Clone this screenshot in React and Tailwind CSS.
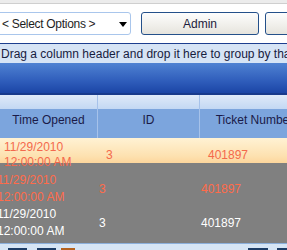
export default function App() {
  const font = { fontFamily: '"Liberation Sans", Arial, sans-serif' };
  const red = "text-[#f4694c]";
  return (
    <div className="w-[287px] h-[250px] overflow-hidden bg-white relative" style={font}>
      {/* top strip */}
      <div className="h-[4px] bg-[#ececec] border-b border-[#cfcfcf]" />
      {/* toolbar */}
      <div className="h-[39px] bg-white flex items-start pt-[8px]">
        <div className="relative -ml-[4px] w-[135px] h-[23px] border border-[#a9c6ec] rounded-[3px] bg-white flex items-center pl-[5px] text-[12px] text-[#1e1e1e] shrink-0">
          <span className="tracking-[-0.3px]">&lt; Select Options &gt;</span>
          <svg className="absolute left-[122px] top-[9px]" width="8" height="5" viewBox="0 0 8 5">
            <path d="M0 0 H8 L4 5 Z" fill="#000" />
          </svg>
        </div>
        <div className="ml-[10px] w-[118px] h-[23px] border border-[#24508a] rounded-[3px] bg-[linear-gradient(to_bottom,#fdfdfd,#f2f1ed_50%,#e6e4dd)] flex items-center justify-center text-[12px] text-[#1c1c3c] shrink-0">
          Admin
        </div>
        <div className="ml-[6px] w-[60px] h-[23px] border border-[#24508a] rounded-[3px] bg-[linear-gradient(to_bottom,#fdfdfd,#f2f1ed_50%,#e6e4dd)] shrink-0" />
      </div>
      {/* group panel */}
      <div className="h-[20px] border-t border-[#1d3f8f] bg-[#d6e4f5] flex items-center pl-[1px] text-[12px] text-[#16203e] whitespace-nowrap overflow-hidden">
        Drag a column header and drop it here to group by that column
      </div>
      {/* blue bar */}
      <div className="h-[32px] bg-[linear-gradient(to_bottom,#4f82d2,#2f5dbb_60%,#1b45a6)] border-b-[2px] border-[#183a8c]" />
      {/* header */}
      <div className="h-[43px] flex text-[12px] text-[#1a1a48]">
        {[
          ["Time Opened", "w-[98px]"],
          ["ID", "w-[102px]"],
          ["Ticket Number", "w-[110px]"],
        ].map(([label, w], i) => (
          <div key={i} className={`${w} shrink-0 flex flex-col border-r border-[#a6c2ea]`}>
            <div className="h-[14px] bg-[linear-gradient(to_bottom,#dfeaf9,#c3d8f3)]" />
            <div className="h-[29px] bg-[#7ca5dd] flex items-start justify-center pt-[2px] whitespace-nowrap">
              {label}
            </div>
          </div>
        ))}
      </div>
      {/* rows */}
      <div className="bg-[#808080] h-[105px] text-[12px] leading-[15px]">
        <div className="h-[34px] flex items-center bg-[linear-gradient(to_bottom,#fff2d4_0px,#fde1b0_18px,#fdd69c_25px,transparent_25px)] relative z-10">
          <div className={`w-[98px] shrink-0 pl-[4px] ${red}`}>
            <div>11/29/2010</div>
            <div>12:00:00 AM</div>
          </div>
          <div className={`w-[102px] shrink-0 pl-[8px] ${red}`}>3</div>
          <div className={`shrink-0 pl-[8px] ${red}`}>401897</div>
        </div>
        <div className="h-[34px] flex items-center -ml-[7px]">
          <div className="w-[98px] shrink-0 pl-[4px] text-[#ff6b4a]">
            <div className="leading-[17px]">11/29/2010</div>
            <div className="leading-[17px]">12:00:00 AM</div>
          </div>
          <div className="w-[102px] shrink-0 pl-[8px] text-[#ff6b4a]">3</div>
          <div className="shrink-0 pl-[8px] text-[#ff6b4a]">401897</div>
        </div>
        <div className="h-[34px] flex items-center -ml-[7px] text-white">
          <div className="w-[98px] shrink-0 pl-[4px]">
            <div className="leading-[17px]">11/29/2010</div>
            <div className="leading-[17px]">12:00:00 AM</div>
          </div>
          <div className="w-[102px] shrink-0 pl-[8px]">3</div>
          <div className="shrink-0 pl-[8px]">401897</div>
        </div>
      </div>
      {/* bottom panel */}
      <div className="h-[10px] border-t border-[#8cb0dc] bg-[#d6e5f5] flex items-start pt-[4px]">
        <div className="ml-[8px] w-[19px] h-[6px] bg-[#1d3d66]" />
        <div className="ml-[10px] w-[19px] h-[6px] bg-[#1d3d66]" />
        <div className="ml-[5px] w-[14px] h-[6px] bg-[#b5621e]" />
        <div className="ml-auto w-[20px] h-[6px] bg-[#1d3d66]" />
        <div className="ml-[9px] w-[10px] h-[6px] bg-[#1d3d66]" />
      </div>
    </div>
  );
}
